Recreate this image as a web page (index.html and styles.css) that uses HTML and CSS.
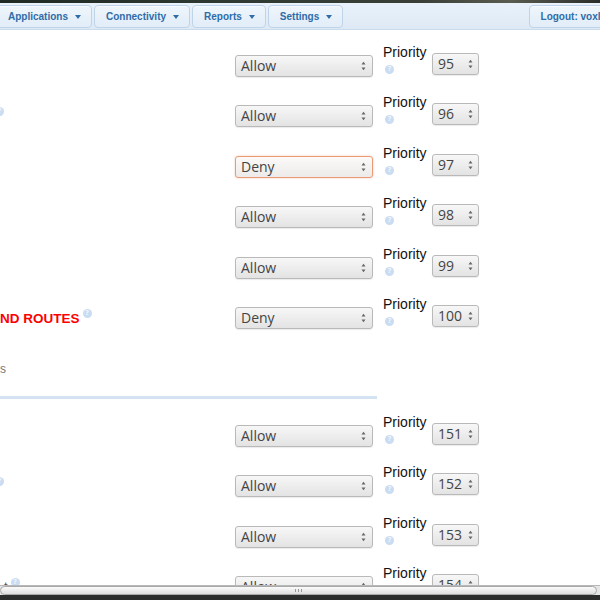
FILE: index.html
```html
<!DOCTYPE html>
<html lang="en">
<head>
<meta charset="utf-8">
<title>Routes</title>
<link rel="stylesheet" href="styles.css">
</head>
<body>
<div class="desk"></div>
<nav class="navbar">
  <div class="navbtn first">Applications <span class="tri"></span></div>
  <div class="navbtn">Connectivity <span class="tri"></span></div>
  <div class="navbtn">Reports <span class="tri"></span></div>
  <div class="navbtn">Settings <span class="tri"></span></div>
  <div class="navbtn logout">Logout: voxlink</div>
</nav>
<main class="content">
  <div class="row">
    <div class="label"></div>
    <div class="sel wide"><span class="val">Allow</span><svg class="caret" viewBox="0 0 5 10"><polygon points="0.5,3.5 2.5,0.8 4.5,3.5"/><polygon points="0.5,6.5 2.5,9.2 4.5,6.5"/></svg></div>
    <div class="prio"><span class="prio-text">Priority</span><span class="help">?</span></div>
    <div class="sel num"><span class="val">95</span><svg class="caret" viewBox="0 0 5 10"><polygon points="0.5,3.5 2.5,0.8 4.5,3.5"/><polygon points="0.5,6.5 2.5,9.2 4.5,6.5"/></svg></div>
  </div>
  <div class="row">
    <div class="label"><span class="help edge">?</span></div>
    <div class="sel wide"><span class="val">Allow</span><svg class="caret" viewBox="0 0 5 10"><polygon points="0.5,3.5 2.5,0.8 4.5,3.5"/><polygon points="0.5,6.5 2.5,9.2 4.5,6.5"/></svg></div>
    <div class="prio"><span class="prio-text">Priority</span><span class="help">?</span></div>
    <div class="sel num"><span class="val">96</span><svg class="caret" viewBox="0 0 5 10"><polygon points="0.5,3.5 2.5,0.8 4.5,3.5"/><polygon points="0.5,6.5 2.5,9.2 4.5,6.5"/></svg></div>
  </div>
  <div class="row">
    <div class="label"></div>
    <div class="sel wide focus"><span class="val">Deny</span><svg class="caret" viewBox="0 0 5 10"><polygon points="0.5,3.5 2.5,0.8 4.5,3.5"/><polygon points="0.5,6.5 2.5,9.2 4.5,6.5"/></svg></div>
    <div class="prio"><span class="prio-text">Priority</span><span class="help">?</span></div>
    <div class="sel num"><span class="val">97</span><svg class="caret" viewBox="0 0 5 10"><polygon points="0.5,3.5 2.5,0.8 4.5,3.5"/><polygon points="0.5,6.5 2.5,9.2 4.5,6.5"/></svg></div>
  </div>
  <div class="row">
    <div class="label"></div>
    <div class="sel wide"><span class="val">Allow</span><svg class="caret" viewBox="0 0 5 10"><polygon points="0.5,3.5 2.5,0.8 4.5,3.5"/><polygon points="0.5,6.5 2.5,9.2 4.5,6.5"/></svg></div>
    <div class="prio"><span class="prio-text">Priority</span><span class="help">?</span></div>
    <div class="sel num"><span class="val">98</span><svg class="caret" viewBox="0 0 5 10"><polygon points="0.5,3.5 2.5,0.8 4.5,3.5"/><polygon points="0.5,6.5 2.5,9.2 4.5,6.5"/></svg></div>
  </div>
  <div class="row">
    <div class="label"></div>
    <div class="sel wide"><span class="val">Allow</span><svg class="caret" viewBox="0 0 5 10"><polygon points="0.5,3.5 2.5,0.8 4.5,3.5"/><polygon points="0.5,6.5 2.5,9.2 4.5,6.5"/></svg></div>
    <div class="prio"><span class="prio-text">Priority</span><span class="help">?</span></div>
    <div class="sel num"><span class="val">99</span><svg class="caret" viewBox="0 0 5 10"><polygon points="0.5,3.5 2.5,0.8 4.5,3.5"/><polygon points="0.5,6.5 2.5,9.2 4.5,6.5"/></svg></div>
  </div>
  <div class="row">
    <div class="label"><span class="warn">ND ROUTES</span><span class="help sup">?</span></div>
    <div class="sel wide"><span class="val">Deny</span><svg class="caret" viewBox="0 0 5 10"><polygon points="0.5,3.5 2.5,0.8 4.5,3.5"/><polygon points="0.5,6.5 2.5,9.2 4.5,6.5"/></svg></div>
    <div class="prio"><span class="prio-text">Priority</span><span class="help">?</span></div>
    <div class="sel num"><span class="val">100</span><svg class="caret" viewBox="0 0 5 10"><polygon points="0.5,3.5 2.5,0.8 4.5,3.5"/><polygon points="0.5,6.5 2.5,9.2 4.5,6.5"/></svg></div>
  </div>

  <div class="subhead">s</div>
  <div class="divider"></div>

  <div class="row first-after">
    <div class="label"></div>
    <div class="sel wide"><span class="val">Allow</span><svg class="caret" viewBox="0 0 5 10"><polygon points="0.5,3.5 2.5,0.8 4.5,3.5"/><polygon points="0.5,6.5 2.5,9.2 4.5,6.5"/></svg></div>
    <div class="prio"><span class="prio-text">Priority</span><span class="help">?</span></div>
    <div class="sel num"><span class="val">151</span><svg class="caret" viewBox="0 0 5 10"><polygon points="0.5,3.5 2.5,0.8 4.5,3.5"/><polygon points="0.5,6.5 2.5,9.2 4.5,6.5"/></svg></div>
  </div>
  <div class="row">
    <div class="label"><span class="help edge">?</span></div>
    <div class="sel wide"><span class="val">Allow</span><svg class="caret" viewBox="0 0 5 10"><polygon points="0.5,3.5 2.5,0.8 4.5,3.5"/><polygon points="0.5,6.5 2.5,9.2 4.5,6.5"/></svg></div>
    <div class="prio"><span class="prio-text">Priority</span><span class="help">?</span></div>
    <div class="sel num"><span class="val">152</span><svg class="caret" viewBox="0 0 5 10"><polygon points="0.5,3.5 2.5,0.8 4.5,3.5"/><polygon points="0.5,6.5 2.5,9.2 4.5,6.5"/></svg></div>
  </div>
  <div class="row">
    <div class="label"></div>
    <div class="sel wide"><span class="val">Allow</span><svg class="caret" viewBox="0 0 5 10"><polygon points="0.5,3.5 2.5,0.8 4.5,3.5"/><polygon points="0.5,6.5 2.5,9.2 4.5,6.5"/></svg></div>
    <div class="prio"><span class="prio-text">Priority</span><span class="help">?</span></div>
    <div class="sel num"><span class="val">153</span><svg class="caret" viewBox="0 0 5 10"><polygon points="0.5,3.5 2.5,0.8 4.5,3.5"/><polygon points="0.5,6.5 2.5,9.2 4.5,6.5"/></svg></div>
  </div>
  <div class="row">
    <div class="label"><span class="frag">t</span><span class="help sup">?</span></div>
    <div class="sel wide"><span class="val">Allow</span><svg class="caret" viewBox="0 0 5 10"><polygon points="0.5,3.5 2.5,0.8 4.5,3.5"/><polygon points="0.5,6.5 2.5,9.2 4.5,6.5"/></svg></div>
    <div class="prio"><span class="prio-text">Priority</span><span class="help">?</span></div>
    <div class="sel num"><span class="val">154</span><svg class="caret" viewBox="0 0 5 10"><polygon points="0.5,3.5 2.5,0.8 4.5,3.5"/><polygon points="0.5,6.5 2.5,9.2 4.5,6.5"/></svg></div>
  </div>
</main>
<div class="hscroll"><div class="thumb"><span class="grip"></span></div></div>
<div class="desk bottom"></div>
</body>
</html>
```

FILE: styles.css
```css
html, body {
  margin: 0;
  padding: 0;
}
body {
  width: 600px;
  height: 600px;
  overflow: hidden;
  display: flex;
  flex-direction: column;
  background: #fff;
  font-family: "Liberation Sans", Arial, sans-serif;
}
.desk {
  height: 3px;
  flex: none;
  background: linear-gradient(90deg, #1f2a24 0%, #2f3a33 40%, #3a4038 70%, #5a5c50 85%, #2a2e2a 100%);
}
.desk.bottom {
  height: 5px;
  background: #2b2d2c;
}
.navbar {
  flex: none;
  height: 27px;
  box-sizing: border-box;
  display: flex;
  align-items: flex-start;
  gap: 2px;
  padding-top: 2px;
  background: linear-gradient(#e9f2fb, #dde9f5);
  border-bottom: 1px solid #c9dcee;
  overflow: hidden;
}
.navbtn {
  flex: none;
  height: 23px;
  box-sizing: border-box;
  display: flex;
  align-items: center;
  gap: 7px;
  padding: 0 10px 0 11px;
  border: 1px solid #bfd4e9;
  border-radius: 4px;
  background: linear-gradient(#eef5fc, #e2edf8);
  box-shadow: inset 0 1px 0 #f8fbfe;
  color: #2f6ca8;
  font-weight: bold;
  font-size: 10px;
  white-space: nowrap;
}
.navbtn.first {
  margin-left: -4px;
}
.navbtn.logout {
  margin-left: auto;
  margin-right: -30px;
  padding-right: 14px;
}
.tri {
  width: 0;
  height: 0;
  border-left: 3.5px solid transparent;
  border-right: 3.5px solid transparent;
  border-top: 4px solid #2f6ca8;
}
.content {
  flex: 1;
  overflow: hidden;
  padding-top: 13px;
}
.row {
  height: 50.4px;
  display: flex;
  align-items: flex-start;
}
.row.first-after {
  margin-top: 13.6px;
}
.label {
  width: 235px;
  flex: none;
  height: 22px;
  margin-top: 12px;
  display: flex;
  align-items: flex-start;
  color: #555;
  font-size: 13px;
  white-space: nowrap;
}
.warn {
  color: #f00;
  font-weight: bold;
  font-size: 13.5px;
  line-height: 24px;
}
.frag {
  color: #555;
  line-height: 16px;
  margin-left: 4px;
  margin-top: 3px;
}
.help {
  flex: none;
  width: 9px;
  height: 9px;
  border-radius: 50%;
  background: #c9dcf1;
  color: #eef4fb;
  font: bold 7px/9px "DejaVu Sans", sans-serif;
  text-align: center;
}
.help.sup {
  margin-left: 3px;
  margin-top: 2px;
}
.help.edge {
  margin-left: -5px;
  margin-top: 2px;
}
.sel {
  flex: none;
  position: relative;
  box-sizing: border-box;
  height: 22px;
  border: 1px solid #b9b9b9;
  border-radius: 3px;
  background: linear-gradient(#f7f7f7, #e3e3e3);
  box-shadow: 0 1px 1px rgba(0, 0, 0, 0.08);
  color: #444;
  font-family: "Open Sans", "DejaVu Sans", sans-serif;
  font-size: 14px;
  line-height: 20px;
  padding-left: 5px;
}
.sel.wide {
  width: 138px;
  margin-top: 12px;
  margin-right: 10px;
}
.sel.focus {
  border-color: #ec9a74;
  background: linear-gradient(#fbfaf9, #ecebea);
  box-shadow: 0 0 2px rgba(236, 140, 95, 0.5);
}
.sel.num {
  width: 47px;
  margin-top: 10px;
}
.caret {
  position: absolute;
  top: 5px;
  right: 6px;
  width: 5px;
  height: 10px;
  fill: #666;
}
.sel.num .caret {
  right: 5px;
}
.prio {
  flex: none;
  width: 49px;
  margin-top: 1px;
  display: flex;
  flex-direction: column;
  align-items: flex-start;
}
.prio-text {
  font-size: 14px;
  line-height: 16px;
  color: #111;
}
.prio .help {
  margin-top: 5px;
  margin-left: 2px;
}
.subhead {
  margin-top: 16px;
  height: 16px;
  line-height: 16px;
  font-size: 12px;
  color: #777;
}
.divider {
  margin-top: 19px;
  width: 377px;
  height: 3px;
  background: #d3e3f2;
}
.hscroll {
  flex: none;
  height: 10px;
  background: #e6e6e6;
  border-top: 1px solid #b8b8b8;
  box-sizing: border-box;
  display: flex;
  padding: 0 3px 0 0;
}
.thumb {
  flex: 1;
  height: 9px;
  box-sizing: border-box;
  border: 1px solid #a9a9a9;
  border-radius: 5px;
  background: linear-gradient(#fbfbfb, #dedede);
  display: flex;
  align-items: center;
  justify-content: center;
}
.grip {
  width: 5px;
  height: 3px;
  border-left: 1px solid #999;
  border-right: 1px solid #999;
  position: relative;
}
.grip::after {
  content: "";
  position: absolute;
  left: 2px;
  top: 0;
  width: 1px;
  height: 3px;
  background: #999;
}
```
